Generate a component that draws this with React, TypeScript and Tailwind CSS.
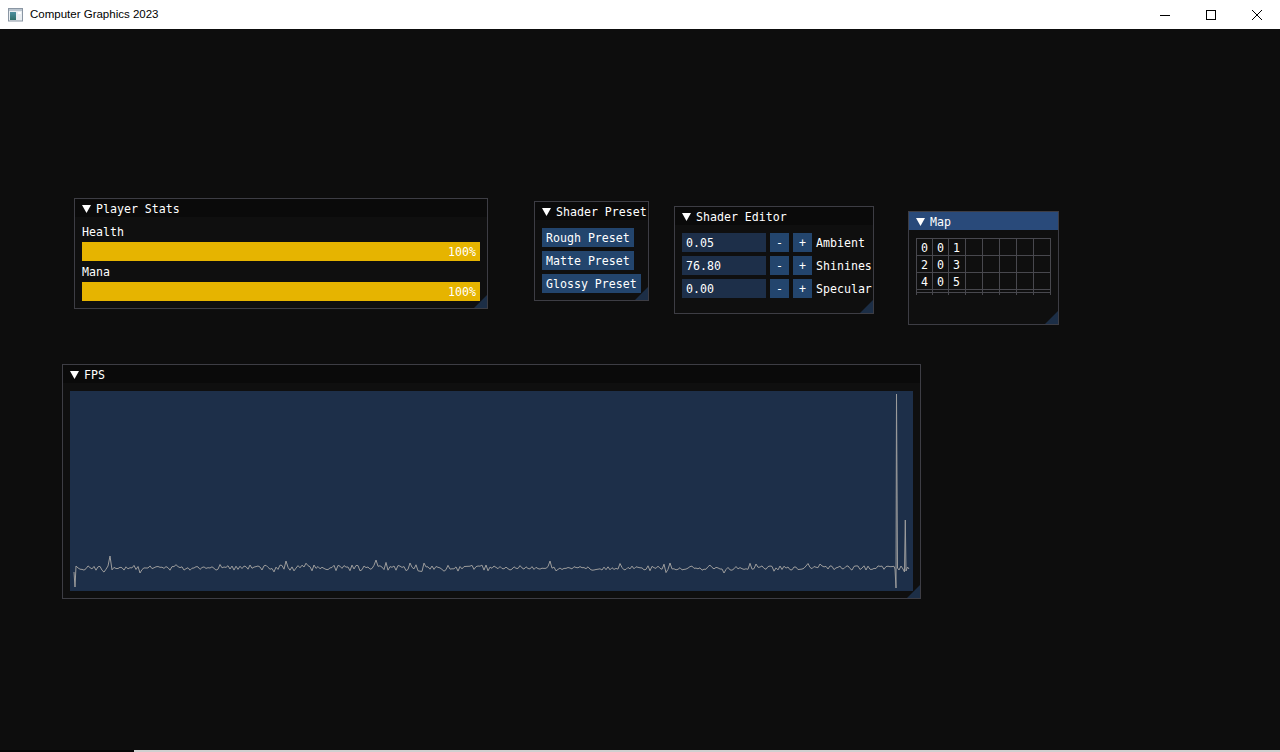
import React from "react";

const MONO =
  "font-['DejaVu_Sans_Mono','Liberation_Mono',monospace] text-[11.6px] leading-[13px] text-white";

function Tri() {
  return (
    <svg width="9" height="8" viewBox="0 0 9 8" className="shrink-0">
      <polygon points="0,0 9,0 4.5,8" fill="#ffffff" />
    </svg>
  );
}

function Grip() {
  return (
    <svg className="absolute bottom-0 right-0" width="13" height="13" viewBox="0 0 13 13">
      <polygon points="13,0 13,13 0,13" fill="#1c2e46" />
    </svg>
  );
}

function Win({
  className,
  title,
  active,
  children,
}: {
  className: string;
  title: string;
  active?: boolean;
  children: React.ReactNode;
}) {
  return (
    <div
      className={`absolute flex flex-col overflow-hidden border border-[#3d3d44] bg-[#0f0f0f] ${MONO} ${className}`}
    >
      <div
        className={`flex h-[18px] shrink-0 items-center gap-[5px] overflow-hidden whitespace-pre pl-[7px] pt-[1px] ${
          active ? "bg-[#294a7a]" : "bg-[#0a0a0a]"
        }`}
      >
        <Tri />
        <span className="pt-[1px]">{title}</span>
      </div>
      <div className="flex min-h-0 flex-1 flex-col overflow-hidden whitespace-pre px-[7px] pt-2">
        {children}
      </div>
      <Grip />
    </div>
  );
}

function Label({ text, first }: { text: string; first?: boolean }) {
  return <div className={`h-[13px] pt-[1px] ${first ? "" : "mt-1"}`}>{text}</div>;
}

function Bar() {
  return (
    <div className="mt-1 flex h-[19px] items-center justify-end bg-[#e6b400] pr-1 pt-[2px]">
      100%
    </div>
  );
}

function PresetButton({ label }: { label: string }) {
  return (
    <div className="flex h-[19px] items-center self-start bg-[#23456d] px-1 pt-[2px]">{label}</div>
  );
}

function EditorRow({ value, label, first }: { value: string; label: string; first?: boolean }) {
  return (
    <div className={`flex h-[19px] items-center gap-1 ${first ? "" : "mt-1"}`}>
      <div className="flex h-[19px] w-[84px] shrink-0 items-center bg-[#1d2f49] px-1 pt-[2px]">
        {value}
      </div>
      <div className="flex h-[19px] w-[19px] shrink-0 items-center justify-center bg-[#23456d] pt-[2px]">
        -
      </div>
      <div className="flex h-[19px] w-[19px] shrink-0 items-center justify-center bg-[#23456d] pt-[2px]">
        +
      </div>
      <span className="shrink-0 pt-[2px]">{label}</span>
    </div>
  );
}

const MAP = [
  ["0", "0", "1"],
  ["2", "0", "3"],
  ["4", "0", "5"],
];

function MapTable() {
  const cells: React.ReactNode[] = [];
  for (let r = 0; r < 3; r++) {
    for (let c = 0; c < 8; c++) {
      cells.push(
        <div
          key={`${r}-${c}`}
          className="flex h-[17px] items-center border-r border-b border-[#48484e] pl-1 pt-[2px]"
        >
          {MAP[r][c] ?? ""}
        </div>
      );
    }
  }
  for (let c = 0; c < 8; c++) {
    cells.push(<div key={`p-${c}`} className="h-[3px] border-r border-b border-[#48484e]" />);
  }
  for (let c = 0; c < 8; c++) {
    cells.push(<div key={`q-${c}`} className="h-[2px] border-r border-[#48484e]" />);
  }
  return (
    <div className="grid w-[135px] grid-cols-[16px_16px_17px_17px_17px_17px_17px_17px] border-l border-t border-[#48484e]">
      {cells}
    </div>
  );
}

function buildPoints(): string {
  let s = 987654321;
  const rnd = () => {
    s = (s * 1103515245 + 12345) % 2147483648;
    return s / 2147483648;
  };
  const pts: [number, number][] = [
    [4, 181],
    [5, 196],
    [6, 175],
  ];
  const spikes: Record<number, number> = {
    39: 165,
    216: 170,
    305: 169,
    340: 172,
    480: 170,
    600: 172,
    750: 173,
  };
  for (let x = 8; x <= 824; x += 2) {
    let amp = 4.5;
    if (x > 150 && x < 420) amp = 6.5;
    if (x > 430 && x < 520) amp = 3;
    let y = 177 + (rnd() - 0.5) * amp;
    if (rnd() < 0.05) y -= 2 + rnd() * 2;
    if (rnd() < 0.03) y += 2 + rnd() * 2;
    for (const k of Object.keys(spikes)) {
      const kx = Number(k);
      if (x === kx || x === kx + 1) y = spikes[kx];
    }
    pts.push([x, y]);
  }
  pts.push([825, 178]);
  pts.push([826, 197]);
  pts.push([826.5, 3]);
  pts.push([827.5, 177]);
  pts.push([829, 179]);
  pts.push([831, 175]);
  pts.push([833, 178]);
  pts.push([834.5, 181]);
  pts.push([835.3, 129]);
  pts.push([836, 180]);
  pts.push([837.5, 176]);
  pts.push([839, 178]);
  return pts.map(([x, y]) => `${x},${y.toFixed(1)}`).join(" ");
}

const POINTS = buildPoints();

function AppIcon() {
  return (
    <svg width="16" height="14" viewBox="0 0 16 14" className="ml-2 shrink-0">
      <defs>
        <linearGradient id="ig" x1="0" y1="0" x2="0" y2="1">
          <stop offset="0" stopColor="#4c8fa0" />
          <stop offset="1" stopColor="#2f6f6a" />
        </linearGradient>
      </defs>
      <rect x="0.5" y="0.5" width="14" height="12.5" fill="#e9eef2" stroke="#8a96a3" />
      <rect x="1" y="1" width="13" height="2" fill="#b9c4ce" />
      <rect x="2" y="4" width="6" height="8" fill="url(#ig)" />
      <rect x="10" y="4" width="3" height="2" fill="#ffffff" />
    </svg>
  );
}

export default function App() {
  return (
    <div className="flex h-[752px] w-[1280px] flex-col overflow-hidden bg-[#0d0d0d]">
      <div className="flex h-[29px] shrink-0 items-center bg-white">
        <AppIcon />
        <span className="ml-[6px] font-['Liberation_Sans',Arial,sans-serif] text-[11.5px] text-black">
          Computer Graphics 2023
        </span>
        <div className="ml-auto flex h-[29px]">
          <div className="flex h-[29px] w-[46px] items-center justify-center">
            <svg width="10" height="10" viewBox="0 0 10 10">
              <line x1="0" y1="5.5" x2="10" y2="5.5" stroke="#000" strokeWidth="1" />
            </svg>
          </div>
          <div className="flex h-[29px] w-[46px] items-center justify-center">
            <svg width="10" height="10" viewBox="0 0 10 10">
              <rect x="0.5" y="0.5" width="9" height="9" fill="none" stroke="#000" strokeWidth="1" />
            </svg>
          </div>
          <div className="flex h-[29px] w-[46px] items-center justify-center">
            <svg width="10" height="10" viewBox="0 0 10 10">
              <line x1="0" y1="0" x2="10" y2="10" stroke="#000" strokeWidth="1" />
              <line x1="10" y1="0" x2="0" y2="10" stroke="#000" strokeWidth="1" />
            </svg>
          </div>
        </div>
      </div>

      <div className="relative flex-1">
        <Win className="left-[74px] top-[169px] h-[111px] w-[414px]" title="Player Stats">
          <Label first text="Health" />
          <Bar />
          <Label text="Mana" />
          <Bar />
        </Win>

        <Win className="left-[534px] top-[172px] h-[100px] w-[115px]" title="Shader Preset">
          <div className="flex flex-col gap-1">
            <PresetButton label="Rough Preset" />
            <PresetButton label="Matte Preset" />
            <PresetButton label="Glossy Preset" />
          </div>
        </Win>

        <Win className="left-[674px] top-[177px] h-[108px] w-[200px]" title="Shader Editor">
          <EditorRow first value="0.05" label="Ambient" />
          <EditorRow value="76.80" label="Shinines" />
          <EditorRow value="0.00" label="Specular" />
        </Win>

        <Win className="left-[908px] top-[182px] h-[114px] w-[151px]" title="Map" active>
          <MapTable />
        </Win>

        <Win className="left-[62px] top-[335px] h-[235px] w-[859px]" title="FPS">
          <div className="h-[200px] w-full shrink-0 bg-[#1d2f49]">
            <svg width="843" height="200" viewBox="0 0 843 200" className="block">
              <polyline
                points={POINTS}
                fill="none"
                stroke="#9c9c9c"
                strokeWidth="1"
                strokeLinejoin="round"
              />
            </svg>
          </div>
        </Win>
      </div>

      <div className="flex h-[2px] shrink-0">
        <div className="w-[134px] bg-[#050505]" />
        <div className="flex-1 bg-[#cfcfcf]" />
      </div>
    </div>
  );
}
